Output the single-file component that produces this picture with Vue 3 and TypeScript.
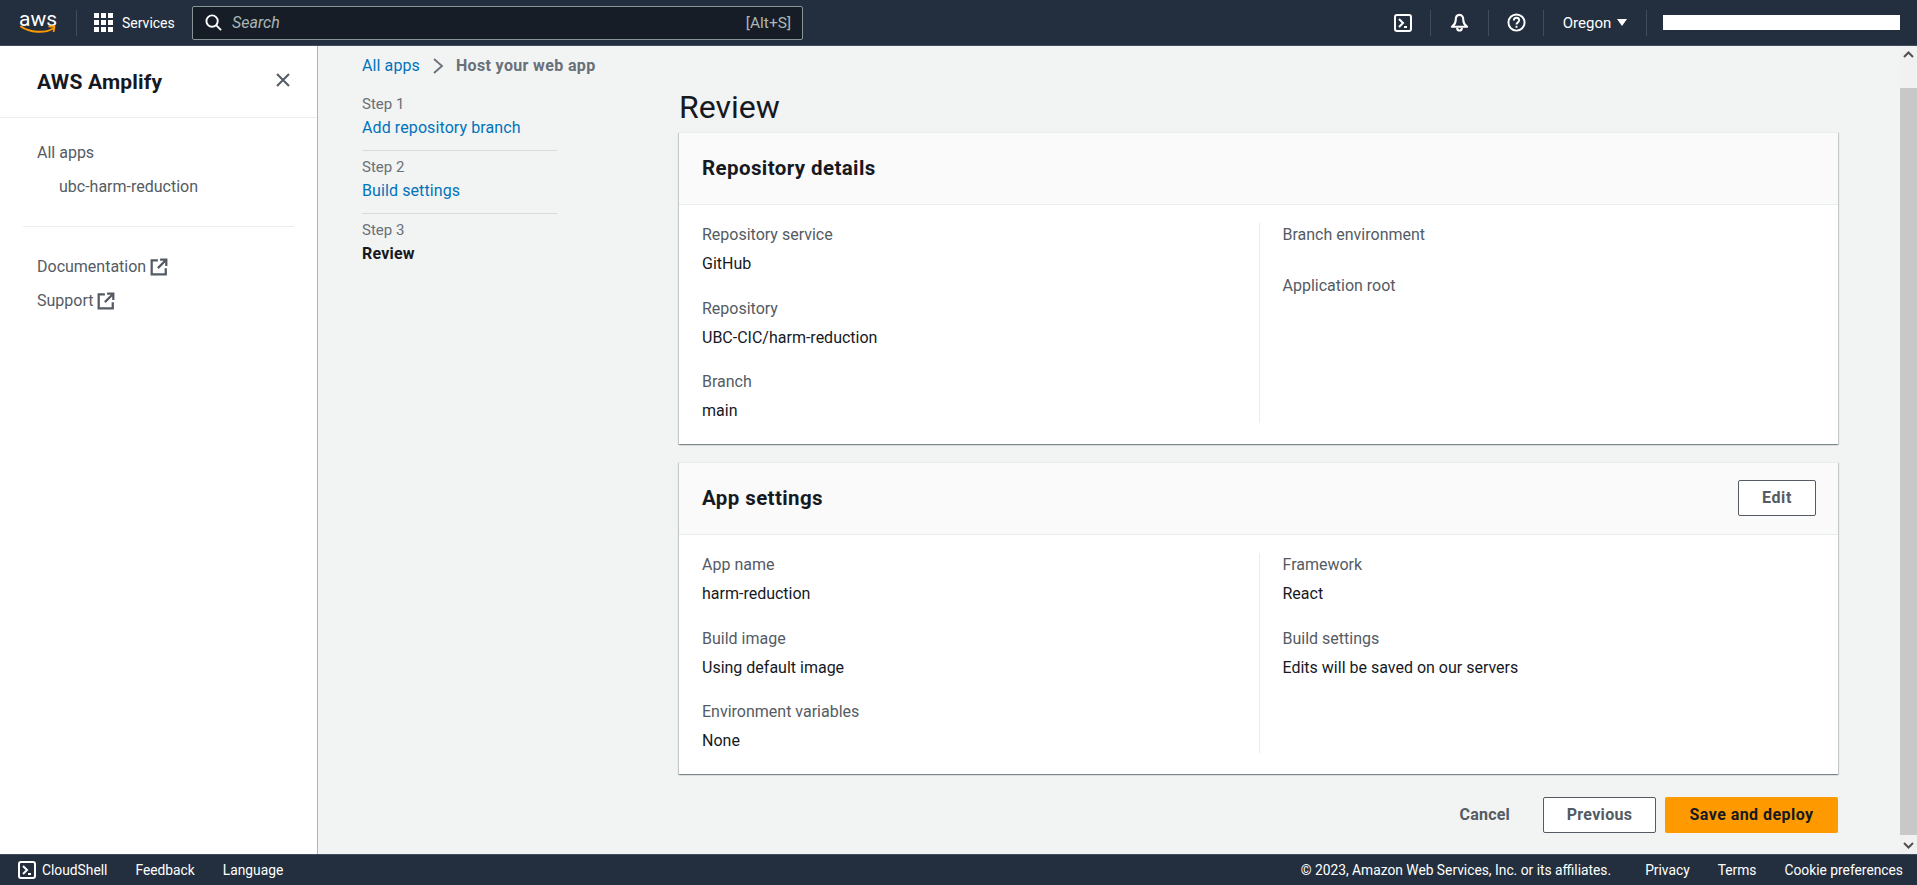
<template>
  <div class="console">
    <header class="top-nav">
      <div class="aws-logo">
        <span class="aws-word">aws</span>
        <svg class="aws-smile" viewBox="0 0 36 10" width="36" height="10">
          <path d="M1 1.500C10 8 25 8.500 33 3.500" fill="none" stroke="#ff9900" stroke-width="2" stroke-linecap="round" />
          <path d="M28.500 1.500L34.500 1.500L33.500 7" fill="none" stroke="#ff9900" stroke-width="1.800" stroke-linejoin="round" />
        </svg>
      </div>
      <span class="logo-sep"></span>
      <div class="services">
        <svg viewBox="0 0 19 19" width="19" height="19" fill="#fff">
          <template v-for="row in [0, 7, 14]" :key="row">
            <rect v-for="col in [0, 7, 14]" :key="col" :x="col" :y="row" width="5" height="5" />
          </template>
        </svg>
        <span>Services</span>
      </div>
      <div class="search">
        <svg viewBox="0 0 18 18" width="17" height="17" fill="none" stroke="#fff" stroke-width="2">
          <circle cx="7.500" cy="7.500" r="6" />
          <path d="M12 12l5 5" />
        </svg>
        <span class="search-text">Search</span>
        <span class="search-key">[Alt+S]</span>
      </div>
      <div class="nav-right">
        <div class="nav-cell cell-shell">
          <svg viewBox="0 0 18 18" width="18" height="18" fill="none" stroke="#fff" stroke-width="2">
            <rect x="1" y="1" width="16" height="16" rx="2" />
            <path d="M5 5l4 4-4 4M10 13h3" />
          </svg>
        </div>
        <div class="nav-cell cell-bell">
          <svg viewBox="0 0 20 20" width="19" height="19" fill="none" stroke="#fff" stroke-width="2.200" stroke-linejoin="round">
            <path d="M10 2c-3 0-4 2.500-4 5.500 0 3-1.500 5-4 7h16c-2.500-2-4-4-4-7C14 4.500 13 2 10 2z" />
            <path d="M7.500 15.500c0 2 1 3 2.500 3s2.500-1 2.500-3" />
          </svg>
        </div>
        <div class="nav-cell cell-help">
          <svg viewBox="0 0 20 20" width="19" height="19" fill="none" stroke="#fff" stroke-width="2">
            <circle cx="10" cy="10" r="8.500" />
            <path d="M7.200 7.800c0-1.800 1.200-2.800 2.800-2.800s2.800 1 2.800 2.600c0 2.400-2.800 2.400-2.800 4.600" />
            <path d="M10 13.500v2" />
          </svg>
        </div>
        <div class="nav-cell cell-region">
          <span>Oregon</span>
          <span class="caret"></span>
        </div>
        <div class="account-bar"></div>
      </div>
    </header>

    <div class="middle">
      <aside class="side-nav">
        <div class="side-header">
          <span class="side-title">AWS Amplify</span>
          <svg class="side-close" viewBox="0 0 16 16" width="16" height="16" fill="none" stroke="#545b64" stroke-width="2">
            <path d="M2 2l12 12M14 2L2 14" />
          </svg>
        </div>
        <div class="side-links">
          <a class="side-link">All apps</a>
          <a class="side-link side-sub">ubc-harm-reduction</a>
        </div>
        <div class="side-divider"></div>
        <div class="side-links side-ext">
          <a v-for="link in extLinks" :key="link" class="side-link">
            {{ link }}
            <svg viewBox="0 0 16 16" width="18" height="18" fill="none" stroke="#545b64" stroke-width="2">
              <path d="M7 2H1.500v12.500H14V9" />
              <path d="M9 1.500h5.500V7M14 2L7 9" />
            </svg>
          </a>
        </div>
      </aside>

      <main class="content">
        <nav class="crumbs">
          <a class="link">All apps</a>
          <svg viewBox="0 0 12 16" width="12" height="16" fill="none" stroke="#687078" stroke-width="1.800">
            <path d="M2 1l8 7-8 7" />
          </svg>
          <span class="crumb-current">Host your web app</span>
        </nav>

        <div class="wizard">
          <ol class="steps">
            <li v-for="step in steps" :key="step.label" class="step">
              <div class="step-label">{{ step.label }}</div>
              <div :class="step.current ? 'step-current' : 'link'">{{ step.title }}</div>
            </li>
          </ol>

          <div class="review">
            <h1 class="review-title">Review</h1>

            <section v-for="card in cards" :key="card.title" class="card">
              <div class="card-header">
                <h2>{{ card.title }}</h2>
                <button v-if="card.editable" class="btn btn-edit">Edit</button>
              </div>
              <div class="card-body">
                <div v-for="(col, i) in card.columns" :key="i" class="card-col">
                  <div v-for="item in col" :key="item.label" class="field">
                    <div class="field-label">{{ item.label }}</div>
                    <div class="field-value">{{ item.value }}</div>
                  </div>
                </div>
              </div>
            </section>

            <div class="actions">
              <button class="btn-plain">Cancel</button>
              <button class="btn btn-prev">Previous</button>
              <button class="btn-primary">Save and deploy</button>
            </div>
          </div>
        </div>
      </main>

      <div class="scrollbar">
        <svg viewBox="0 0 17 17" width="17" height="17"><path d="M4 11l4.500-4.500L13 11" fill="none" stroke="#505050" stroke-width="2" /></svg>
        <div class="scroll-gap-top"></div>
        <div class="scroll-thumb"></div>
        <div class="scroll-gap-bottom"></div>
        <svg viewBox="0 0 17 17" width="17" height="17"><path d="M4 6l4.500 4.500L13 6" fill="none" stroke="#505050" stroke-width="2" /></svg>
      </div>
    </div>

    <footer class="bottom-bar">
      <div class="foot-left">
        <span class="foot-shell">
          <svg viewBox="0 0 18 18" width="18" height="18" fill="none" stroke="#fff" stroke-width="2">
            <rect x="1" y="1" width="16" height="16" rx="2" />
            <path d="M5 5l4 4-4 4M10 13h3" />
          </svg>
          CloudShell
        </span>
        <span>Feedback</span>
        <span>Language</span>
      </div>
      <div class="foot-right">
        <span class="foot-copy">© 2023, Amazon Web Services, Inc. or its affiliates.</span>
        <span>Privacy</span>
        <span>Terms</span>
        <span>Cookie preferences</span>
      </div>
    </footer>
  </div>
</template>

<script setup lang="ts">
interface Field {
  label: string
  value: string
}

interface Card {
  title: string
  editable: boolean
  columns: Field[][]
}

const extLinks: string[] = ['Documentation', 'Support']

const steps = [
  { label: 'Step 1', title: 'Add repository branch', current: false },
  { label: 'Step 2', title: 'Build settings', current: false },
  { label: 'Step 3', title: 'Review', current: true },
]

const cards: Card[] = [
  {
    title: 'Repository details',
    editable: false,
    columns: [
      [
        { label: 'Repository service', value: 'GitHub' },
        { label: 'Repository', value: 'UBC-CIC/harm-reduction' },
        { label: 'Branch', value: 'main' },
      ],
      [
        { label: 'Branch environment', value: '' },
        { label: 'Application root', value: '' },
      ],
    ],
  },
  {
    title: 'App settings',
    editable: true,
    columns: [
      [
        { label: 'App name', value: 'harm-reduction' },
        { label: 'Build image', value: 'Using default image' },
        { label: 'Environment variables', value: 'None' },
      ],
      [
        { label: 'Framework', value: 'React' },
        { label: 'Build settings', value: 'Edits will be saved on our servers' },
      ],
    ],
  },
]
</script>

<style scoped>
.console {
  height: 885px;
  display: flex;
  flex-direction: column;
  overflow: hidden;
  font-family: Roboto, "Open Sans", sans-serif;
  font-size: 16px;
  line-height: 22px;
  color: #16191f;
  background: #f2f3f3;
}

/* top bar */
.top-nav {
  flex: none;
  height: 46px;
  box-sizing: border-box;
  display: flex;
  align-items: center;
  padding-left: 20px;
  background: #232f3e;
  border-bottom: 1px solid #414d5c;
  color: #fff;
}

.aws-logo {
  width: 36px;
  height: 24px;
  display: flex;
  flex-direction: column;
  align-items: center;
  position: relative;
}

.aws-word {
  font-size: 21px;
  line-height: 16px;
}

.aws-smile {
  position: absolute;
  top: 14px;
  left: 0;
}

.logo-sep {
  width: 1px;
  height: 26px;
  margin: 0 17px 0 20px;
  background: #414d5c;
}

.services {
  display: flex;
  align-items: center;
  gap: 9px;
  width: 98px;
  font-size: 14px;
  white-space: nowrap;
}

.search {
  width: 611px;
  height: 34px;
  box-sizing: border-box;
  display: flex;
  align-items: center;
  padding: 0 11px 0 12px;
  background: #161d26;
  border: 1px solid #879596;
  border-radius: 2px;
}

.search-text {
  margin-left: 10px;
  font-style: italic;
  color: #aab7b8;
}

.search-key {
  margin-left: auto;
  font-size: 15.5px;
  color: #aab7b8;
}

.nav-right {
  margin-left: auto;
  display: flex;
  align-items: center;
  padding-right: 17px;
}

.nav-cell {
  height: 26px;
  display: flex;
  align-items: center;
  justify-content: center;
  border-right: 1px solid #414d5c;
  box-sizing: border-box;
}

.cell-shell { width: 55px; }
.cell-bell { width: 58px; }
.cell-help { width: 55px; }

.cell-region {
  width: 103px;
  gap: 6px;
  font-size: 15px;
}

.caret {
  width: 0;
  height: 0;
  border-left: 5px solid transparent;
  border-right: 5px solid transparent;
  border-top: 7px solid #fff;
}

.account-bar {
  width: 237px;
  height: 15px;
  margin-left: 16px;
  background: #fff;
}

/* middle */
.middle {
  flex: 1;
  min-height: 0;
  display: flex;
}

.side-nav {
  flex: none;
  width: 318px;
  box-sizing: border-box;
  background: #fff;
  border-right: 1px solid #aab7b8;
}

.side-header {
  height: 72px;
  box-sizing: border-box;
  display: flex;
  align-items: center;
  justify-content: space-between;
  padding: 0 26px 0 37px;
  border-bottom: 1px solid #eaeded;
}

.side-title {
  font-size: 21px;
  font-weight: 700;
  line-height: 28px;
  letter-spacing: 0.2px;
}

.side-close {
  margin-top: -4px;
}

.side-links {
  display: flex;
  flex-direction: column;
  gap: 12px;
  padding: 24px 0 0 37px;
}

.side-link {
  display: flex;
  align-items: center;
  gap: 4px;
  color: #545b64;
}

.side-sub {
  padding-left: 22px;
}

.side-divider {
  height: 1px;
  margin: 28px 23px 0;
  background: #eaeded;
}

.side-ext {
  padding-top: 29px;
}

/* content */
.content {
  flex: 1;
  min-width: 0;
  box-sizing: border-box;
  padding: 8px 62px 0 44px;
}

.crumbs {
  height: 24px;
  display: flex;
  align-items: center;
  gap: 12px;
}

.link {
  color: #0073bb;
  letter-spacing: 0.1px;
}

.crumb-current {
  font-weight: 700;
  color: #687078;
  letter-spacing: 0.35px;
}

.wizard {
  display: grid;
  grid-template-columns: 195px 1fr;
  gap: 122px;
  margin-top: 11px;
}

.steps {
  list-style: none;
  margin: 0;
  padding: 4px 0 0;
}

.step {
  padding: 5px 0 11px;
  border-bottom: 1px solid #d5dbdb;
}

.step:first-child {
  padding-top: 0;
}

.step:last-child {
  border-bottom: none;
}

.step-label {
  margin-bottom: 2px;
  font-size: 15px;
  color: #687078;
}

.step-current {
  font-weight: 700;
  letter-spacing: 0.2px;
}

.review-title {
  margin: 0 0 7px;
  font-size: 32px;
  font-weight: 400;
  line-height: 36px;
}

.card {
  margin-bottom: 18px;
  background: #fff;
  border-top: 1px solid #eaeded;
  box-shadow: 0 1px 1px 0 rgba(0, 28, 36, 0.3), 1px 1px 1px 0 rgba(0, 28, 36, 0.15), -1px 1px 1px 0 rgba(0, 28, 36, 0.15);
}

.card-header {
  height: 72px;
  box-sizing: border-box;
  display: flex;
  align-items: center;
  justify-content: space-between;
  padding: 0 22px 0 23px;
  background: #fafafa;
  border-bottom: 1px solid #eaeded;
}

.card-header h2 {
  margin: 0;
  font-size: 20.5px;
  font-weight: 700;
  line-height: 24px;
  letter-spacing: 0.4px;
  transform: translateY(-1px);
}

.card-body {
  display: grid;
  grid-template-columns: 1fr 1fr;
  padding: 18px 23px 21px;
}

.card-col {
  min-height: 200px;
}

.card-col + .card-col {
  border-left: 1px solid #eaeded;
  padding-left: 23px;
}

.field {
  padding-bottom: 21.5px;
}

.field:last-child {
  padding-bottom: 0;
}

.field-label {
  margin-bottom: 7px;
  padding-top: 1px;
  color: #545b64;
}

.field-value:not(:empty) {
  height: 22px;
}

.field-value:empty {
  margin-top: -1px;
}

.btn {
  height: 36px;
  box-sizing: border-box;
  background: #fff;
  border: 1px solid #545b64;
  border-radius: 2px;
  font: 700 16px/22px Roboto, "Open Sans", sans-serif;
  letter-spacing: 0.3px;
  color: #545b64;
}

.btn-edit {
  width: 78px;
  margin-top: -1px;
  letter-spacing: 0.6px;
}

.actions {
  display: flex;
  justify-content: flex-end;
  align-items: center;
  gap: 9px;
  margin-top: 23px;
}

.btn-plain {
  height: 36px;
  padding: 0 24px 0 0;
  background: none;
  border: none;
  font: 700 16px/22px Roboto, "Open Sans", sans-serif;
  letter-spacing: 0.2px;
  color: #545b64;
}

.btn-prev {
  width: 113px;
}

.btn-primary {
  width: 173px;
  height: 36px;
  background: #ff9900;
  border: none;
  border-radius: 2px;
  font: 700 16px/22px Roboto, "Open Sans", sans-serif;
  letter-spacing: 0.45px;
  color: #16191f;
}

/* scrollbar */
.scrollbar {
  flex: none;
  width: 17px;
  display: flex;
  flex-direction: column;
  background: #f1f1f1;
}

.scroll-gap-top {
  height: 25px;
}

.scroll-thumb {
  flex: 1;
  background: #c8c8c8;
}

.scroll-gap-bottom {
  height: 2px;
}

/* footer */
.bottom-bar {
  flex: none;
  height: 31px;
  box-sizing: border-box;
  display: flex;
  align-items: center;
  justify-content: space-between;
  padding: 0 14px 0 18px;
  background: #232f3e;
  border-top: 1px solid #414d5c;
  color: #fff;
  font-size: 13.8px;
}

.foot-left,
.foot-right {
  display: flex;
  align-items: center;
}

.foot-left {
  gap: 28px;
}

.foot-shell {
  display: flex;
  align-items: center;
  gap: 6px;
}

.foot-right {
  gap: 28px;
}

.foot-copy {
  margin-right: 6px;
}
</style>

<style>
html,
body {
  margin: 0;
  overflow: hidden;
}
</style>
